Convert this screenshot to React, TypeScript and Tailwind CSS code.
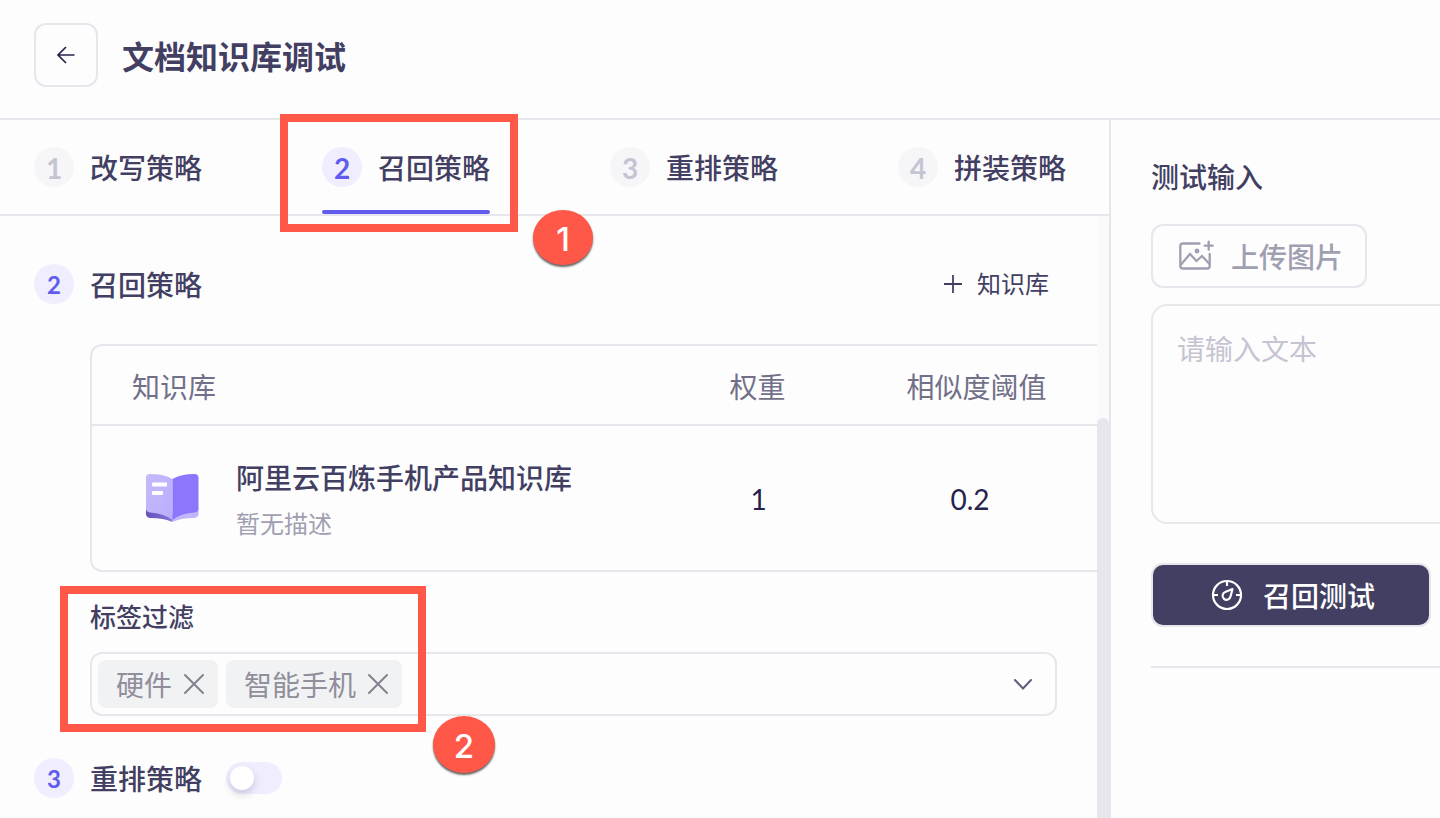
import type { ReactNode } from 'react';

interface StepBadgeProps {
  value: number;
  active?: boolean;
  small?: boolean;
}

interface Step {
  id: number;
  label: string;
}

const steps: Step[] = [
  { id: 1, label: '改写策略' },
  { id: 2, label: '召回策略' },
  { id: 3, label: '重排策略' },
  { id: 4, label: '拼装策略' }
];

const ACTIVE_STEP = 2;

const tags = ['硬件', '智能手机'];

function StepBadge({ value, active = false, small = false }: StepBadgeProps) {
  return (
    <span
      className={`flex h-10 w-10 shrink-0 items-center justify-center rounded-full font-bold ${
        active ? 'bg-[#f0eefe] text-[#615ced]' : 'bg-[#f6f6f9] text-[#c5c4d2]'
      } ${small ? 'pt-px text-2xl' : 'pt-0.5'}`}
    >
      {value}
    </span>
  );
}

function Header() {
  return (
    <header className="flex h-[120px] shrink-0 items-start border-b-2 border-[#e6e6ed] pt-[23px] pl-[34px]">
      <button type="button" className="flex h-16 w-16 items-center justify-center rounded-xl border-2 border-[#e6e6ed]">
        <svg className="h-6 w-6" viewBox="0 0 24 24" fill="none" stroke="#26244c" strokeWidth={1.7}>
          <path d="M20.5 12H4M12 4L4 12l8 8" />
        </svg>
      </button>
      <h1 className="ml-6 pt-[10px] text-[32px] leading-[48px] font-bold">文档知识库调试</h1>
    </header>
  );
}

function StepTabs() {
  return (
    <nav className="flex h-24 shrink-0 gap-[120px] border-b-2 border-[#e6e6ed] pl-[34px]">
      {steps.map((step) => (
        <div
          key={step.id}
          className={`flex h-[94px] w-[168px] flex-col justify-between ${step.id === ACTIVE_STEP ? 'text-[#615ced]' : 'text-transparent'}`}
        >
          <div className="flex h-[67px] items-end gap-4">
            <StepBadge value={step.id} active={step.id === ACTIVE_STEP} />
            <span className="h-[39px] font-medium whitespace-nowrap text-[#423f63]">{step.label}</span>
          </div>
          <span className="h-1 rounded-sm bg-current" />
        </div>
      ))}
    </nav>
  );
}

function BookIcon() {
  return (
    <svg className="h-[52px] w-[60px]" viewBox="0 0 60 52" fill="none">
      <defs>
        <linearGradient id="pageLeft" x1="0" y1="0" x2="1" y2="1">
          <stop offset="0" stopColor="#c5bafc" />
          <stop offset="1" stopColor="#b9adfc" />
        </linearGradient>
        <linearGradient id="coverLeft" x1="0" y1="0" x2="1" y2="0">
          <stop offset="0" stopColor="#6550bd" />
          <stop offset="1" stopColor="#8573d8" />
        </linearGradient>
      </defs>
      <path d="M3 36v6q0 3 4 4 14 0 22.500 4V42z" fill="url(#coverLeft)" />
      <path d="M55.500 36v6q0 3-4 4-14 0-22 4V42z" fill="#c2b6fb" />
      <path d="M3 6q0-4 4-4 14 0 22.500 5v41Q20 41 7 40.500q-4-.5-4-4z" fill="url(#pageLeft)" />
      <path d="M29.500 7Q38 2 51.500 2q4 0 4 4v31q0 3-4 3.500Q38 41 29.500 48z" fill="#8e76fc" />
      <rect x="9" y="10.500" width="15" height="4" rx="1" fill="white" />
      <rect x="9" y="19" width="11" height="4" rx="1" fill="white" />
    </svg>
  );
}

function KnowledgeTable() {
  return (
    <div className="ml-[90px] h-[228px] rounded-l-xl border-2 border-r-0 border-[#e6e6ed]">
      <div className="flex h-20 items-center border-b-2 border-[#e6e6ed] pt-1 text-[#727089]">
        <span className="w-[560px] pl-10">知识库</span>
        <span className="w-[211px] text-center">权重</span>
        <span className="w-[227px] text-center">相似度阈值</span>
      </div>
      <div className="flex h-36 items-center">
        <div className="flex w-[560px] items-center pl-[51px]">
          <BookIcon />
          <div className="ml-[33px]">
            <div className="pt-0.5 text-[28px] leading-[44px] font-medium">阿里云百炼手机产品知识库</div>
            <div className="mt-1.5 text-2xl leading-9 text-[#a09fb1]">暂无描述</div>
          </div>
        </div>
        <span className="w-[213px] pt-px text-center text-[#26244c]">1</span>
        <span className="w-[210px] pt-px text-center text-[#26244c]">0.2</span>
      </div>
    </div>
  );
}

function Tag({ children }: { children: ReactNode }) {
  return (
    <span className="flex h-12 items-center gap-3 rounded-lg bg-[#f1f2f4] pr-3.5 pl-[18px] text-[#908e9b]">
      <span className="pt-0.5">{children}</span>
      <svg className="h-5 w-5" viewBox="0 0 20 20" fill="none" stroke="#84828f" strokeWidth={2} strokeLinecap="round">
        <path d="M1 1l18 18M19 1L1 19" />
      </svg>
    </span>
  );
}

function TagFilter() {
  return (
    <div className="ml-[90px] w-[967px]">
      <div className="text-[26px] leading-10 font-medium">标签过滤</div>
      <div className="mt-[15px] flex h-16 items-center gap-2 rounded-xl border-2 border-[#e6e6ed] pr-[22px] pl-1.5">
        {tags.map((tag) => (
          <Tag key={tag}>{tag}</Tag>
        ))}
        <svg className="ml-auto h-5 w-5" viewBox="0 0 20 20" fill="none" stroke="#5f5c7c" strokeWidth={2} strokeLinecap="round">
          <path d="M2 6l8 8.500L18 6" />
        </svg>
      </div>
    </div>
  );
}

function StrategyPanel() {
  return (
    <main className="flex min-h-0 flex-1">
      <div className="flex w-[1097px] flex-col">
        <div className="mt-12 flex h-10 items-center pr-12 pl-[34px]">
          <StepBadge value={2} active small />
          <span className="ml-4 pt-0.5 font-medium">召回策略</span>
          <button type="button" className="ml-auto flex items-center gap-[15px] text-2xl">
            <svg className="h-[18px] w-[18px]" viewBox="0 0 18 18" fill="none" stroke="#423f63" strokeWidth={1.8}>
              <path d="M9 0v18M0 9h18" />
            </svg>
            知识库
          </button>
        </div>
        <div className="mt-10">
          <KnowledgeTable />
        </div>
        <div className="mt-[25px]">
          <TagFilter />
        </div>
        <div className="mt-[42px] flex h-10 items-center pl-[34px]">
          <StepBadge value={3} active small />
          <span className="ml-4 pt-0.5 font-medium">重排策略</span>
          <span className="ml-6 flex h-8 w-14 items-center rounded-full bg-[#f0eefe] pl-1">
            <span className="h-6 w-6 rounded-full bg-white shadow-[0_4px_8px_rgba(38,36,76,0.2)]" />
          </span>
        </div>
      </div>
      {/* scroll track */}
      <div className="flex w-3 flex-col rounded-t-md bg-[#fafafa] pt-[202px]">
        <span className="flex-1 rounded-t-md bg-[#e6e6ed]" />
      </div>
    </main>
  );
}

function TestPanel() {
  return (
    <aside className="flex flex-1 flex-col items-start overflow-hidden border-l-2 border-[#e6e6ed] pl-10">
      <h2 className="mt-9 leading-[42px] font-medium">测试输入</h2>
      <button
        type="button"
        className="mt-[26px] flex h-16 w-[216px] items-center rounded-xl border-2 border-[#e6e6ed] pl-[26px] text-[#a09fb1]"
      >
        <svg className="h-9 w-9" viewBox="0 0 36 36" fill="none" stroke="currentColor" strokeWidth={2.3} strokeLinecap="round">
          <path d="M20.500 5.500H4Q1.300 5.500 1.300 8v20q0 2.500 2.700 2.500h24q2.700 0 2.700-2.500V16" />
          <path d="M2 26.500L11 16l6.500 7 5.500-5 7.500 8" />
          <path d="M29.700 3.700v8M25.700 7.700h8" />
          <circle cx="18" cy="13" r="1.300" fill="currentColor" />
        </svg>
        <span className="ml-4 pt-0.5 font-medium">上传图片</span>
      </button>
      <div className="mt-4 h-[220px] w-[340px] shrink-0 rounded-2xl border-2 border-[#e8e8ea] px-6 pt-[22px] leading-[42px] text-[#c5c4d2]">
        请输入文本
      </div>
      <button
        type="button"
        className="mt-[39px] flex h-16 w-[280px] items-center rounded-xl border-2 border-[#e6e6ed] bg-[#423f63] pl-[58px] text-white"
      >
        <svg className="h-8 w-8" viewBox="0 0 32 32" fill="none" stroke="currentColor" strokeWidth={2.2}>
          <circle cx="16" cy="16" r="14" />
          <path d="M16 2v5M2 16h5M25 16h5" />
          <path d="M21.500 10l-7.300 3a4 4 0 1 0 5.300 4.500z" strokeLinejoin="round" />
        </svg>
        <span className="ml-5 pt-0.5 font-medium">召回测试</span>
      </button>
      <hr className="mt-[39px] w-full border-t-2 border-[#e6e6ed]" />
    </aside>
  );
}

export default function App() {
  return (
    <div className="relative flex h-[818px] w-[1440px] flex-col overflow-hidden bg-[#fdfdfd] font-['Lato','Noto_Sans_CJK_SC',sans-serif] text-[28px] leading-[40px] text-[#423f63]">
      <Header />
      <div className="flex min-h-0 flex-1">
        <div className="flex w-[1109px] shrink-0 flex-col">
          <StepTabs />
          <StrategyPanel />
        </div>
        <TestPanel />
      </div>

      {/* tutorial callouts */}
      <div className="absolute top-[114px] left-[280px] h-[118px] w-[238px] border-8 border-[#ff5849]" />
      <div className="absolute top-[210px] left-[533px] flex h-[55px] w-[60px] items-center justify-center rounded-[50%] bg-[#ff5849] pt-0.5 font-['Inter',sans-serif] text-[33px] font-medium text-white shadow-[0_2px_2px_rgba(0,0,0,0.6)]">
        1
      </div>
      <div className="absolute top-[586px] left-[60px] h-[146px] w-[366px] border-8 border-[#ff5849]" />
      <div className="absolute top-[716px] left-[433px] flex h-[57px] w-[62px] items-center justify-center rounded-[50%] bg-[#ff5849] pt-0.5 font-['Inter',sans-serif] text-[33px] font-medium text-white shadow-[0_2px_2px_rgba(0,0,0,0.6)]">
        2
      </div>
    </div>
  );
}
